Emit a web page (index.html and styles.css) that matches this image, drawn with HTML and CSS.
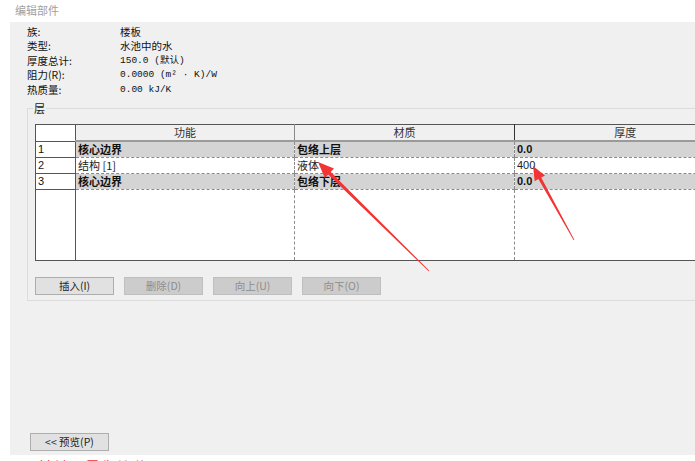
FILE: index.html
```html
<!DOCTYPE html>
<html lang="zh">
<head>
  <meta charset="UTF-8" />
  <title>编辑部件</title>
  <link rel="stylesheet" href="styles.css">
</head>
<body>
  <div class="title">编辑部件</div>

  <div class="panel">
    <div class="info">
      <span>族:</span><span>楼板</span>
      <span>类型:</span><span>水池中的水</span>
      <span>厚度总计:</span><span class="val">150.0 (默认)</span>
      <span>阻力(R):</span><span class="val">0.0000 (m² · K)/W</span>
      <span>热质量:</span><span class="val">0.00 kJ/K</span>
    </div>

    <div class="group">
      <span class="legend">层</span>
      <table class="layers">
        <colgroup>
          <col class="c-num"><col class="c-func"><col class="c-mat"><col class="c-thk">
        </colgroup>
        <tr class="head">
          <th class="num"></th><th>功能</th><th>材质</th><th>厚度</th>
        </tr>
        <tr class="core">
          <td class="num">1</td><td>核心边界</td><td>包络上层</td><td>0.0</td>
        </tr>
        <tr>
          <td class="num">2</td><td>结构 [1]</td><td>液体</td><td>400</td>
        </tr>
        <tr class="core">
          <td class="num">3</td><td>核心边界</td><td>包络下层</td><td>0.0</td>
        </tr>
        <tr class="empty">
          <td class="num"></td><td></td><td></td><td></td>
        </tr>
      </table>

      <div class="buttons">
        <button class="btn">插入(I)</button>
        <button class="btn off">删除(D)</button>
        <button class="btn off">向上(U)</button>
        <button class="btn off">向下(O)</button>
      </div>
    </div>

    <button class="btn preview">&lt;&lt; 预览(P)</button>
  </div>

  <div class="note">材料设置为液体</div>

  <svg class="arrows" width="695" height="461" viewBox="0 0 695 461">
    <polygon points="318,162 334,168.5 330.7,172 429.3,270.7 428.7,271.3 328.2,174.5 324.8,178" />
    <polygon points="533,166 545,175.4 541.2,177.5 574.35,239.8 573.65,240.2 538.4,179 534.7,181.3" />
  </svg>
</body>
</html>
```

FILE: styles.css
```css
* {
  box-sizing: border-box;
}
html, body {
  height: 461px;
  overflow: hidden;
}
body {
  margin: 0;
  background: #fff;
  font-family: "Noto Sans CJK SC", "DejaVu Sans", sans-serif;
  font-size: 11px;
  color: #222;
  position: relative;
}
.title {
  height: 22px;
  padding: 3px 0 0 15px;
  color: #a0a0a0;
  line-height: 14px;
}
.panel {
  margin-left: 10px;
  height: 433px;
  background: #f0f0f0;
  padding-top: 3px;
  overflow: hidden;
}
.info {
  display: grid;
  grid-template-columns: 93px auto;
  padding-left: 17px;
  line-height: 14.4px;
  font-size: 10.5px;
  color: #111;
}
.info .val {
  font-family: "Liberation Mono", "Noto Sans CJK SC", monospace;
  font-size: 9.5px;
}
.group {
  position: relative;
  margin: 11px 0 0 17px;
  width: 720px;
  border: 1px solid #dcdcdc;
  padding: 15px 0 5px 7px;
}
.legend {
  position: absolute;
  top: -8px;
  left: 5px;
  padding: 0 1px;
  background: #f0f0f0;
  line-height: 14px;
  color: #222;
}
.layers {
  border-collapse: collapse;
  table-layout: fixed;
  width: 700px;
  background: #fff;
  border: 1px solid #555;
  border-right: none;
}
.c-num { width: 40px; }
.c-func { width: 219px; }
.c-mat { width: 220px; }
.c-thk { width: 221px; }
.layers th,
.layers td {
  padding: 0 2px;
  height: 16px;
  line-height: 15px;
  text-align: left;
  white-space: nowrap;
  overflow: hidden;
  border-left: 1px dashed #8a8a8a;
  border-bottom: 1px dashed #8a8a8a;
}
.layers .head th {
  height: 15px;
  background: #f0f0f0;
  font-weight: normal;
  text-align: center;
  color: #333;
  border-left: 1px solid #8a8a8a;
  border-bottom: 2px solid #9a9a9a;
}
.layers .head th:nth-child(4) {
  border-left-color: #333;
}
.layers td.num,
.layers th.num {
  border: 1px solid #555;
  background: #fff;
  font-family: "Liberation Sans", Arial, sans-serif;
  color: #222;
}
.layers .core td {
  background: #d4d4d4;
  font-weight: bold;
  color: #111;
}
.layers .core td.num {
  background: #fff;
  font-weight: normal;
}
.layers td:nth-child(4) {
  font-family: "Liberation Sans", Arial, sans-serif;
}
.layers .empty td {
  height: 71px;
}
.buttons {
  display: flex;
  gap: 10px;
  margin-top: 16px;
}
.btn {
  width: 79px;
  height: 18px;
  padding: 0;
  font-family: "Noto Sans CJK SC", "DejaVu Sans", sans-serif;
  font-size: 10.5px;
  line-height: 16px;
  color: #222;
  background: #e1e1e1;
  border: 1px solid #adadad;
  border-radius: 0;
}
.btn.off {
  background: #cccccc;
  border-color: #bfbfbf;
  color: #8c8c8c;
}
.preview {
  display: block;
  margin: 132px 0 0 20px;
}
.note {
  margin: 3px 0 0 38px;
  font-size: 13px;
  line-height: 16px;
  color: #f03030;
  letter-spacing: 3px;
}
.arrows {
  position: absolute;
  left: 0;
  top: 0;
  pointer-events: none;
}
.arrows polygon {
  fill: #f23434;
}
```
